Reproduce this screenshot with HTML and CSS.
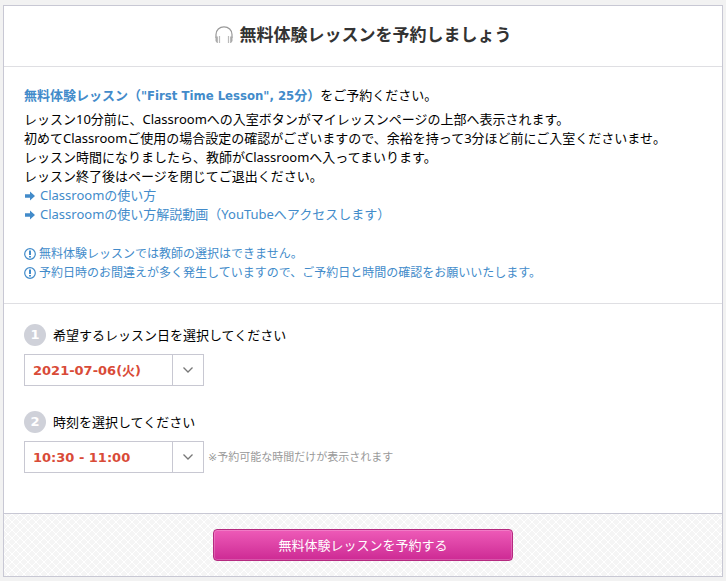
FILE: index.html
```html
<!DOCTYPE html>
<html lang="ja">
<head>
    <meta charset="UTF-8">
    <meta name="viewport" content="width=device-width, initial-scale=1.0">
    <title>無料体験レッスン予約</title>
    <link rel="stylesheet" href="styles.css">
</head>
<body>
    <form class="booking">
        <header class="booking-header">
            <svg class="icon-headphones" width="18" height="18" viewBox="0 0 18 18">
                <path d="M1 12V8.500C1 4 4.500 0.800 9 0.800S17 4 17 8.500V12" fill="none" stroke="#999" stroke-width="1.200"/>
                <path d="M0.500 10.500h2.300V17H2L0.500 15zM17.500 10.500h-2.300V17H16L17.500 15z" fill="#aaa"/>
                <path d="M4.500 10V17M13.500 10V17" stroke="#bbb" stroke-width="1.200"/>
            </svg>
            <h1>無料体験レッスンを予約しましょう</h1>
        </header>

        <section class="guide">
            <p class="lead"><strong>無料体験レッスン（"First Time Lesson", 25分）</strong>をご予約ください。</p>
            <p>レッスン10分前に、Classroomへの入室ボタンがマイレッスンページの上部へ表示されます。</p>
            <p>初めてClassroomご使用の場合設定の確認がございますので、余裕を持って3分ほど前にご入室くださいませ。</p>
            <p>レッスン時間になりましたら、教師がClassroomへ入ってまいります。</p>
            <p>レッスン終了後はページを閉じてご退出ください。</p>
            <ul class="links">
                <li>
                    <svg width="12" height="12" viewBox="0 0 12 12"><path d="M1 4.200h5V1.500L11 6 6 10.500V7.800H1z"/></svg>
                    <a href="#">Classroomの使い方</a>
                </li>
                <li>
                    <svg width="12" height="12" viewBox="0 0 12 12"><path d="M1 4.200h5V1.500L11 6 6 10.500V7.800H1z"/></svg>
                    <a href="#">Classroomの使い方解説動画（YouTubeへアクセスします）</a>
                </li>
            </ul>
            <ul class="notices">
                <li>
                    <svg width="12" height="12" viewBox="0 0 12 12"><circle cx="6" cy="6" r="5.300"/><path class="mark" d="M6 2.500V7M6 8V9.600"/></svg>
                    <span>無料体験レッスンでは教師の選択はできません。</span>
                </li>
                <li>
                    <svg width="12" height="12" viewBox="0 0 12 12"><circle cx="6" cy="6" r="5.300"/><path class="mark" d="M6 2.500V7M6 8V9.600"/></svg>
                    <span>予約日時のお間違えが多く発生していますので、ご予約日と時間の確認をお願いいたします。</span>
                </li>
            </ul>
        </section>

        <section class="steps">
            <div class="step">
                <label class="step-title" for="lesson-date"><span class="number">1</span>希望するレッスン日を選択してください</label>
                <div class="step-field">
                    <div class="select">
                        <select id="lesson-date">
                            <option>2021-07-06(火)</option>
                        </select>
                        <svg class="chevron" width="10" height="6" viewBox="0 0 10 6"><path d="M0.500 0.500L5 5 9.500 0.500"/></svg>
                    </div>
                </div>
            </div>
            <div class="step">
                <label class="step-title" for="lesson-time"><span class="number">2</span>時刻を選択してください</label>
                <div class="step-field">
                    <div class="select">
                        <select id="lesson-time">
                            <option>10:30 - 11:00</option>
                        </select>
                        <svg class="chevron" width="10" height="6" viewBox="0 0 10 6"><path d="M0.500 0.500L5 5 9.500 0.500"/></svg>
                    </div>
                    <span class="hint">※予約可能な時間だけが表示されます</span>
                </div>
            </div>
        </section>

        <footer class="booking-footer">
            <button type="submit" class="reserve">無料体験レッスンを予約する</button>
        </footer>
    </form>
</body>
</html>
```
FILE: styles.css
```css
* {
    box-sizing: border-box;
}
body {
    margin: 0;
    padding: 5px 3px 4px;
    background-color: #f2f2f2;
    color: #000;
    font-family: 'DejaVu Sans', 'Noto Sans CJK JP', sans-serif;
    font-size: 13px;
    line-height: 19px;
}
h1, p, ul {
    margin: 0;
    padding: 0;
}
ul {
    list-style: none;
}
.booking {
    background-color: #fff;
    border: 1px solid #c8c8d4;
}
.booking-header {
    display: flex;
    align-items: center;
    justify-content: center;
    gap: 7px;
    height: 61px;
    padding-bottom: 3px;
    border-bottom: 1px solid #dfdfe3;
}
.booking-header h1 {
    color: #333;
    font-size: 17px;
    line-height: 24px;
}
.guide {
    padding: 19px 20px 21px;
    border-bottom: 1px solid #dfdfe3;
    font-family: 'Noto Sans', 'Noto Sans CJK JP', sans-serif;
}
.lead {
    margin-bottom: 5px;
}
.lead strong {
    color: #428bca;
    font-family: 'DejaVu Sans Condensed', 'Noto Sans CJK JP', sans-serif;
}
.links li, .notices li {
    display: flex;
    align-items: center;
    gap: 4px;
    color: #428bca;
}
.links svg {
    fill: #428bca;
}
.links a {
    color: #428bca;
    text-decoration: none;
}
.links a:hover {
    text-decoration: underline;
}
.notices {
    margin-top: 20px;
    font-size: 12px;
}
.notices li {
    gap: 3px;
}
.notices svg {
    fill: none;
    stroke: #428bca;
    stroke-width: 1.2;
}
.notices .mark {
    stroke-width: 2;
}
.steps {
    display: flex;
    flex-direction: column;
    gap: 25px;
    padding: 20px 20px 40px;
}
.step-title {
    display: flex;
    align-items: center;
    gap: 7px;
    margin-bottom: 8px;
}
.number {
    width: 22px;
    border-radius: 50%;
    background-color: #cfd1d9;
    color: #fff;
    font-weight: bold;
    line-height: 22px;
    text-align: center;
}
.step-field {
    display: flex;
    align-items: center;
    gap: 4px;
}
.select {
    position: relative;
    width: 180px;
}
.select select {
    display: block;
    appearance: none;
    width: 100%;
    height: 32px;
    padding: 0 40px 0 8px;
    border: 1px solid #c8c8d2;
    border-radius: 0;
    background: linear-gradient(#c8c8d2, #c8c8d2) right 30px top / 1px 100% no-repeat #fff;
    color: #d94b38;
    font: inherit;
    font-weight: bold;
}
.chevron {
    position: absolute;
    top: 13px;
    right: 11px;
    fill: none;
    stroke: #777;
    stroke-width: 1.3;
    pointer-events: none;
}
.hint {
    color: #999;
    font-size: 11px;
}
.booking-footer {
    display: flex;
    justify-content: center;
    padding: 15px;
    border-top: 1px solid #c8c8d4;
    background-color: #f5f5f5;
    background-image:
        linear-gradient(45deg, transparent 45%, #fff 45%, #fff 55%, transparent 55%),
        linear-gradient(-45deg, transparent 45%, #fff 45%, #fff 55%, transparent 55%);
    background-size: 8px 8px;
}
.reserve {
    width: 300px;
    height: 32px;
    padding: 0;
    border: 1px solid #b52a80;
    border-radius: 4px;
    background: linear-gradient(#ee5bb8, #cd2a94);
    box-shadow: inset 0 0 0 1px rgba(255, 255, 255, 0.2);
    color: #fff;
    font: inherit;
    cursor: pointer;
}
```
